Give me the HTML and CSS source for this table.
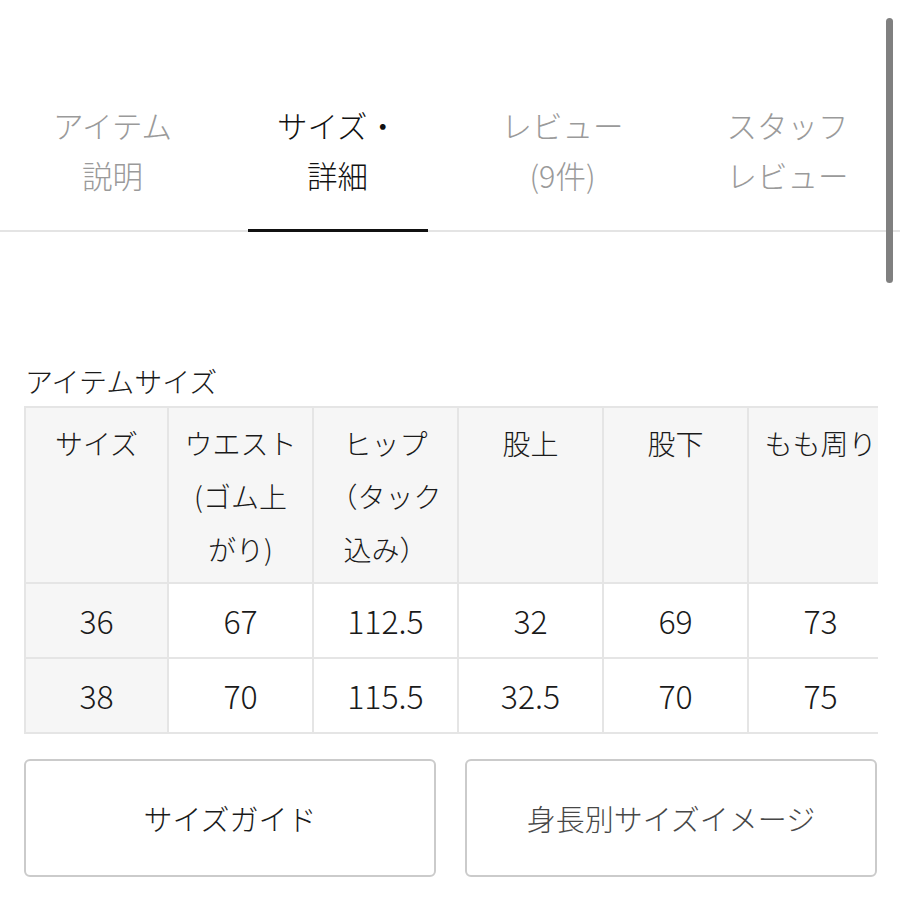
FILE: index.html
```html
<!DOCTYPE html>
<html lang="ja">
<head>
<meta charset="utf-8">
<title>サイズ・詳細</title>
<link rel="stylesheet" href="styles.css">
</head>
<body>
<div class="page">
  <nav class="tabs">
    <div class="tab">アイテム<br>説明</div>
    <div class="tab active">サイズ・<br>詳細</div>
    <div class="tab">レビュー<br>(9件)</div>
    <div class="tab">スタッフ<br>レビュー</div>
  </nav>

  <section class="sizes">
    <h2 class="label">アイテムサイズ</h2>
    <div class="table-wrap">
      <table class="size-table">
        <thead>
          <tr>
            <th class="c1">サイズ</th>
            <th>ウエスト(ゴム上がり)</th>
            <th>ヒップ（タック込み）</th>
            <th>股上</th>
            <th>股下</th>
            <th>もも周り</th>
          </tr>
        </thead>
        <tbody>
          <tr>
            <td class="c1">36</td>
            <td>67</td>
            <td>112.5</td>
            <td>32</td>
            <td>69</td>
            <td>73</td>
          </tr>
          <tr>
            <td class="c1">38</td>
            <td>70</td>
            <td>115.5</td>
            <td>32.5</td>
            <td>70</td>
            <td>75</td>
          </tr>
        </tbody>
      </table>
    </div>
    <div class="buttons">
      <button class="btn">サイズガイド</button>
      <button class="btn btn-sub">身長別サイズイメージ</button>
    </div>
  </section>

  <div class="scrollbar"></div>
</div>
</body>
</html>
```

FILE: styles.css
```css
* {
  box-sizing: border-box;
}

html, body {
  margin: 0;
  padding: 0;
  background: #ffffff;
}

body {
  font-family: "Noto Sans CJK JP", "Noto Sans", sans-serif;
  font-weight: 300;
  color: #1a1a1a;
}

.page {
  position: relative;
  width: 900px;
  min-height: 900px;
}

/* Tabs */
.tabs {
  display: grid;
  grid-template-columns: repeat(4, 1fr);
  border-bottom: 2px solid #e4e4e4;
}

.tab {
  position: relative;
  padding: 100px 0 30px;
  text-align: center;
  font-size: 30.5px;
  line-height: 50px;
  color: #9a9a9a;
}

.tab.active {
  color: #111111;
}

.tab.active::after {
  content: "";
  position: absolute;
  left: 50%;
  bottom: -2px;
  width: 180px;
  height: 3px;
  margin-left: -90px;
  background: #111111;
}

/* Size section */
.sizes {
  padding: 0 23px 0 24px;
}

.label {
  margin: 129px 0 5px 1px;
  font-size: 28px;
  line-height: 40px;
  font-weight: 300;
  color: #1a1a1a;
}

.table-wrap {
  width: 854px;
  overflow: hidden;
  border-top: 2px solid #e5e5e5;
  border-left: 2px solid #e5e5e5;
}

.size-table {
  table-layout: fixed;
  width: 868px;
  border-collapse: separate;
  border-spacing: 0;
}

.size-table th,
.size-table td {
  width: 145px;
  border-right: 2px solid #e5e5e5;
  border-bottom: 2px solid #e5e5e5;
  text-align: center;
  color: #1a1a1a;
}

.size-table .c1 {
  width: 143px;
}

.size-table th {
  vertical-align: top;
  padding: 9px 12px 6px;
  font-size: 28px;
  line-height: 53px;
  font-weight: 300;
  background: #f6f6f6;
}

.size-table td {
  padding: 0;
  font-size: 32px;
  line-height: 73px;
  font-weight: 300;
  vertical-align: middle;
  background: #ffffff;
}

.size-table td.c1 {
  background: #f6f6f6;
}

/* Buttons */
.buttons {
  display: grid;
  grid-template-columns: 1fr 1fr;
  gap: 29px;
  margin-top: 25px;
}

.btn {
  height: 118px;
  border: 2px solid #cbcbcb;
  border-radius: 6px;
  background: #ffffff;
  font-family: "Noto Sans CJK JP", "Noto Sans", sans-serif;
  font-weight: 300;
  font-size: 29px;
  color: #1a1a1a;
  padding: 0;
}

.btn-sub {
  color: #474747;
}

/* Overlay scrollbar */
.scrollbar {
  position: absolute;
  left: 886px;
  top: 18px;
  width: 7px;
  height: 265px;
  border-radius: 4px;
  background: #808080;
}
```
